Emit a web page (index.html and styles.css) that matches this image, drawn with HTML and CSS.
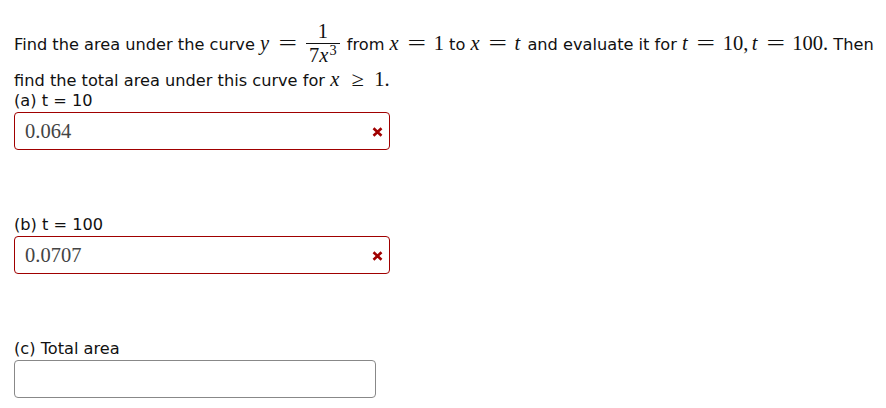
FILE: index.html
```html
<!DOCTYPE html>
<html>
<head>
<meta charset="utf-8">
<link rel="stylesheet" href="styles.css">
</head>
<body>
<div class="question">
  <div class="line first">Find the area under the curve <span class="m"><i>y</i><span class="rel">=</span><span class="frac"><span class="num">1</span><span class="bar"></span><span class="den">7<i>x</i><sup>3</sup></span></span></span> from <span class="m"><i>x</i><span class="rel">=</span>1</span> to <span class="m"><i>x</i><span class="rel">=</span><i>t</i></span> and evaluate it for <span class="m"><i>t</i><span class="rel">=</span>10,<span class="thin"></span><i>t</i><span class="rel">=</span>100.</span> Then</div>
  <div class="line">find the total area under this curve for <span class="m"><i>x</i><span class="rel ge">≥</span>1.</span></div>

  <div class="part">
    <div class="label">(a) t = 10</div>
    <div class="answer wrong"><span class="val">0.064</span><svg class="xmark" width="11" height="10" viewBox="0 0 11 10"><path d="M1.5 1.2 L9.5 8.8 M9.5 1.2 L1.5 8.8" stroke="#a00000" stroke-width="2.6" fill="none"/></svg></div>
  </div>

  <div class="part">
    <div class="label">(b) t = 100</div>
    <div class="answer wrong"><span class="val">0.0707</span><svg class="xmark" width="11" height="10" viewBox="0 0 11 10"><path d="M1.5 1.2 L9.5 8.8 M9.5 1.2 L1.5 8.8" stroke="#a00000" stroke-width="2.6" fill="none"/></svg></div>
  </div>

  <div class="part">
    <div class="label">(c) Total area</div>
    <div class="answer empty"></div>
  </div>
</div>
</body>
</html>
```
FILE: styles.css
```css
html, body {
  margin: 0;
  padding: 0;
  background: #fff;
}
body {
  font-family: "DejaVu Sans", Verdana, sans-serif;
  font-size: 16.2px;
  color: #111;
}
.question {
  padding: 20px 0 0 14px;
}
.line {
  line-height: 20px;
  white-space: nowrap;
}
.line.first {
  margin-bottom: 3px;
}
.m {
  font-family: "Liberation Serif", "DejaVu Serif", serif;
  font-size: 20.5px;
}
.m i {
  font-family: "Liberation Serif", "DejaVu Serif", serif;
  font-style: italic;
  margin-right: 2px;
}
.rel {
  display: inline-block;
  width: 0.95em;
  margin: 0 0.33em;
  text-align: center;
  transform: scaleX(1.6);
}
.rel.ge {
  transform: scaleX(1.1);
}
.thin {
  display: inline-block;
  width: 3.4px;
}
.frac {
  display: inline-block;
  vertical-align: -12.5px;
  text-align: center;
  margin: 0 2px;
}
.num, .den {
  display: block;
  line-height: 22px;
  padding: 0 3px;
}
.den i {
  margin-right: 1px;
}
.bar {
  display: block;
  border-top: 1px solid #111;
  margin-top: 1px;
}
.den sup {
  font-size: 14.3px;
  vertical-align: 7.5px;
  line-height: 0;
}
.part {
  margin-bottom: 65px;
}
.part:last-child {
  margin-bottom: 0;
}
.label {
  line-height: 20px;
  margin-bottom: 1px;
}
.answer {
  position: relative;
  box-sizing: border-box;
  width: 376px;
  height: 38px;
  border: 1px solid #888;
  border-radius: 4px;
  padding-left: 10px;
  display: flex;
  align-items: center;
}
.answer.wrong {
  border-color: #a00000;
}
.answer.empty {
  width: 362px;
}
.val {
  font-family: "Liberation Serif", "DejaVu Serif", serif;
  font-size: 20.5px;
  color: #444;
}
.xmark {
  position: absolute;
  right: 6px;
  top: 14px;
}
```
